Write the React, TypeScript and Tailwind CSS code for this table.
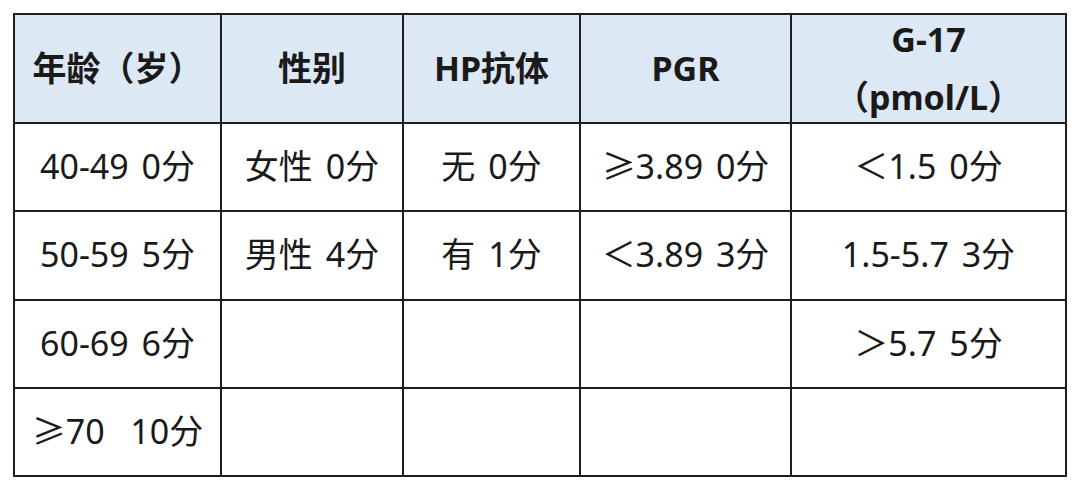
import React from "react";

const cols = ["w-[207px]", "w-[182px]", "w-[177px]", "w-[211px]", "w-[275px]"];

const header = ["年龄（岁）", "性别", "HP抗体", "PGR", "G-17"];
const rows: string[][] = [
  ["40-49 0分", "女性 0分", "无 0分", "≥3.89 0分", "＜1.5 0分"],
  ["50-59 5分", "男性 4分", "有 1分", "＜3.89 3分", "1.5-5.7 3分"],
  ["60-69 6分", "", "", "", "＞5.7 5分"],
  ["≥70\u00a0\u00a010分", "", "", "", ""],
];
const rowH = ["h-[88px]", "h-[89px]", "h-[88px]", "h-[88px]"];

export default function App() {
  return (
    <div
      className="w-[1080px] h-[490px] bg-white text-[#1a1a1a]"
      style={{ fontFamily: '"Noto Sans", "Noto Sans CJK SC", sans-serif' }}
    >
      <div className="pt-[13px] pl-[13px]">
        <div className="inline-flex flex-col border-t-2 border-l-2 border-[#1e1e1e]">
          <div className="flex h-[109px] bg-[#dce8f4]">
            {header.map((h, i) => (
              <div
                key={i}
                className={`${cols[i]} h-full border-r-2 border-b-2 border-[#1e1e1e] flex flex-col items-center justify-center font-bold text-[34px]`}
              >
                {i === 4 ? (
                  <>
                    <div className="leading-[42px] -mt-[2px]">G-17</div>
                    <div className="leading-[42px] mt-[16px]">（pmol/L）</div>
                  </>
                ) : (
                  <div className="leading-[42px] -mt-[2px]">{h}</div>
                )}
              </div>
            ))}
          </div>
          {rows.map((r, ri) => (
            <div key={ri} className={`flex ${rowH[ri]}`}>
              {r.map((c, ci) => (
                <div
                  key={ci}
                  className={`${cols[ci]} h-full border-r-2 border-b-2 border-[#1e1e1e] flex items-center justify-center text-[34px] [word-spacing:4px] whitespace-pre`}
                >
                  <span className="leading-[42px] -mt-[3px]">{c}</span>
                </div>
              ))}
            </div>
          ))}
        </div>
      </div>
    </div>
  );
}
